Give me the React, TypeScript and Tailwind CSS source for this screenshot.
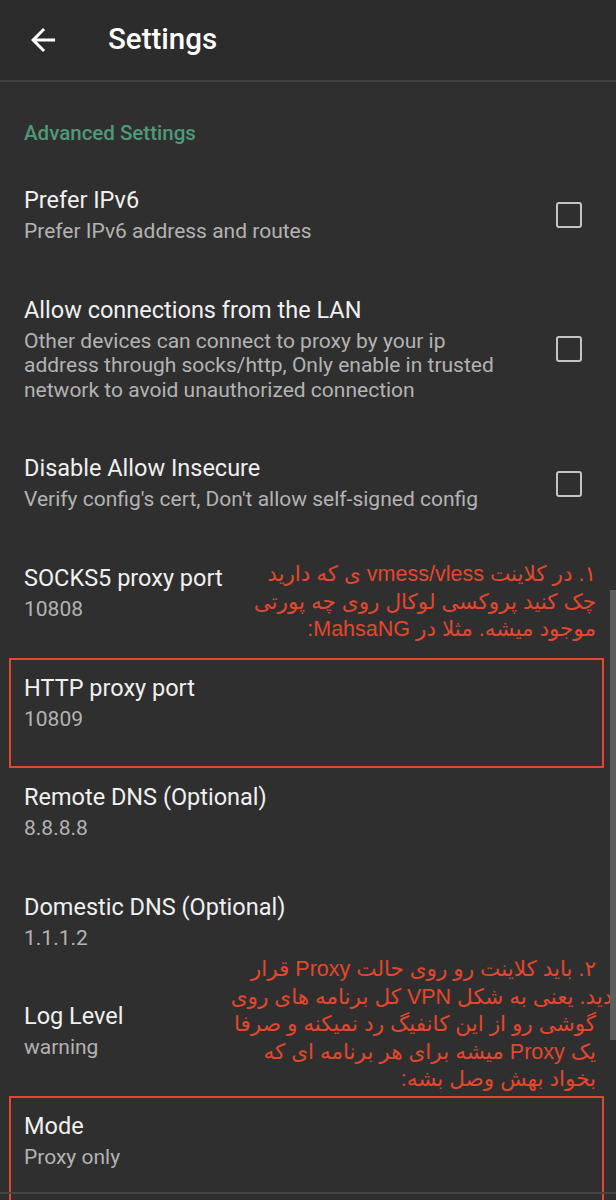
import React from "react";

type Row = {
  title: string;
  summary: string[];
  checkbox?: boolean;
  boxed?: boolean;
};

const rows: Row[] = [
  { title: "Prefer IPv6", summary: ["Prefer IPv6 address and routes"], checkbox: true },
  {
    title: "Allow connections from the LAN",
    summary: [
      "Other devices can connect to proxy by your ip",
      "address through socks/http, Only enable in trusted",
      "network to avoid unauthorized connection",
    ],
    checkbox: true,
  },
  { title: "Disable Allow Insecure", summary: ["Verify config's cert, Don't allow self-signed config"], checkbox: true },
  { title: "SOCKS5 proxy port", summary: ["10808"] },
  { title: "HTTP proxy port", summary: ["10809"], boxed: true },
  { title: "Remote DNS (Optional)", summary: ["8.8.8.8"] },
  { title: "Domestic DNS (Optional)", summary: ["1.1.1.2"] },
  { title: "Log Level", summary: ["warning"] },
  { title: "Mode", summary: ["Proxy only"], boxed: true },
];

const note1 = [
  "۱. در کلاینت vmess/vless ی که دارید",
  "چک کنید پروکسی  لوکال روی چه پورتی",
  "موجود میشه. مثلا در MahsaNG:",
];

const note2 = [
  "۲. باید کلاینت رو روی حالت Proxy قرار",
  "بدید. یعنی به شکل VPN کل برنامه های روی",
  "گوشی رو از این کانفیگ رد نمیکنه و صرفا",
  "یک Proxy میشه برای هر برنامه ای که",
  "بخواد بهش وصل بشه:",
];

// annotation drawn over the screenshot, right aligned
const Note = ({ lines, top }: { lines: string[]; top: string }) => (
  <div
    dir="rtl"
    className={`absolute ${top} right-[20px] flex flex-col items-start text-[#e4472d] text-[21.5px] leading-[27.5px] font-['Liberation_Sans','DejaVu_Sans',sans-serif]`}
  >
    {lines.map((l, i) => (
      <p key={i} className={`whitespace-nowrap ${i === 1 && lines.length > 3 ? "-mr-[24px]" : ""}`}>
        {l}
      </p>
    ))}
  </div>
);

export default function App() {
  return (
    <div className="relative w-[616px] h-[1200px] overflow-hidden bg-[#2f2f2f] font-['Roboto',sans-serif]">
      <header className="h-[82px] flex items-center bg-[#2c2c2c] border-b-2 border-[#414141]">
        <svg viewBox="0 0 24 24" className="w-[36px] h-[36px] ml-[25px] fill-white">
          <path d="M20 11H7.83l5.59-5.59L12 4l-8 8 8 8 1.41-1.41L7.83 13H20v-2z" />
        </svg>
        <h1 className="ml-[47px] text-[29.5px] font-medium text-white -mt-[2px]">Settings</h1>
      </header>

      <p className="pt-[38px] pb-[14.5px] pl-[24px] text-[20.5px] leading-[26px] font-medium text-[#4e9a76]">
        Advanced Settings
      </p>

      <div className="flex flex-col">
        {rows.map((r) => (
          <div key={r.title} className="relative flex items-center px-[24px] py-[26.5px]">
            {r.boxed && (
              <div className="absolute left-[9px] right-[12px] top-[10px] h-[110px] border-2 border-[#e4472d]" />
            )}
            <div className="flex-1">
              <p className="text-[23.5px] leading-[26px] text-[#f0f0f0] mb-[6px]">{r.title}</p>
              {r.summary.map((s) => (
                <p key={s} className="text-[21px] leading-[24.6px] text-[#b3b3b3] whitespace-nowrap">
                  {s}
                </p>
              ))}
            </div>
            {r.checkbox && (
              <div className="shrink-0 w-[26px] h-[26px] mr-[10px] rounded-[3px] border-[2.5px] border-[#c4c4c4]" />
            )}
          </div>
        ))}
      </div>

      <Note lines={note1} top="top-[561px]" />
      <Note lines={note2} top="top-[956px]" />

      <div className="absolute right-0 top-[590px] w-[6px] h-[450px] bg-[#5e5e5e]" />
      <div className="absolute left-0 right-0 top-[1192px] h-[2px] bg-[#454545]" />
    </div>
  );
}
